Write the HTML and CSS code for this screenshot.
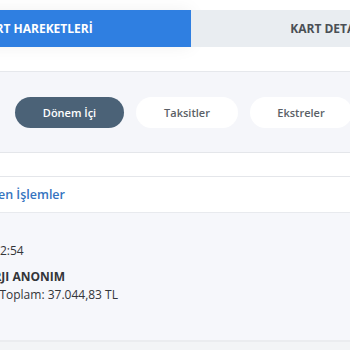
FILE: index.html
```html
<!DOCTYPE html>
<html lang="tr">
<head>
<meta charset="utf-8">
<link rel="stylesheet" href="styles.css">
</head>
<body>
<div class="page">
  <div class="tabs">
    <div class="tab tab-active">KART HAREKETLERİ</div>
    <div class="tab tab-other">KART DETAYLARI</div>
  </div>
  <div class="spacer"></div>
  <div class="filters">
    <div class="pill pill-active">Dönem İçi</div>
    <div class="pill">Taksitler</div>
    <div class="pill">Ekstreler</div>
  </div>
  <div class="gap"></div>
  <div class="section-title">Bekleyen İşlemler</div>
  <div class="card">
    <div class="line date">25/10/23 12:54</div>
    <div class="line name">ARTI ENERJI ANONIM</div>
    <div class="line total">Ödenecek Toplam: 37.044,83 TL</div>
  </div>
  <div class="footer"></div>
</div>
</body>
</html>
```
FILE: styles.css
```css
html, body {
  margin: 0;
  padding: 0;
  background: #ffffff;
  overflow: hidden;
  font-family: "Open Sans", "Liberation Sans", sans-serif;
}
.page {
  margin-left: -124px;
  width: 618px;
  height: 350px;
  display: flex;
  flex-direction: column;
}
.tabs {
  margin-top: 10px;
  padding-left: 5px;
  display: flex;
  height: 37px;
}
.tab {
  display: flex;
  align-items: center;
  justify-content: center;
  font-size: 12px;
  font-weight: 700;
  color: #4a4f55;
  background: #e9edf1;
}
.tab-active {
  flex: 0 0 310px;
  background: #2f7fe1;
  color: #ffffff;
  box-shadow: 0 0 18px rgba(0, 0, 0, 0.06);
}
.tab-other {
  flex: 0 0 298px;
}
.spacer {
  height: 24px;
  border-bottom: 1px solid #e6e8ec;
}
.filters {
  background: #f5f6fa;
  height: 80px;
  border-bottom: 1px solid #e4e6ea;
  display: flex;
  align-items: center;
  gap: 12px;
  padding-left: 139px;
}
.pill {
  height: 31px;
  border-radius: 16px;
  display: flex;
  align-items: center;
  justify-content: center;
  font-size: 11px;
  font-weight: 600;
  color: #5a5f66;
  background: #ffffff;
  width: 102px;
}
.pill-active {
  width: 109px;
  background: #4b6277;
  color: #ffffff;
}
.gap {
  height: 23px;
  border-bottom: 1px solid #e4e6ea;
}
.section-title {
  height: 35px;
  display: flex;
  align-items: center;
  padding-left: 82px;
  font-size: 12.5px;
  font-weight: 600;
  color: #3574c0;
  border-bottom: 1px solid #e8eaee;
}
.card {
  background: #f6f7fb;
  height: 129px;
  padding-left: 64px;
  padding-top: 29px;
  box-sizing: border-box;
  border-bottom: 2px solid #ebecef;
  color: #333539;
  font-size: 12px;
}
.line {
  line-height: 18px;
}
.date {
  margin-bottom: 8px;
}
.name {
  font-weight: 700;
}
.footer {
  flex: 1;
  background: #f3f4f6;
}
```
